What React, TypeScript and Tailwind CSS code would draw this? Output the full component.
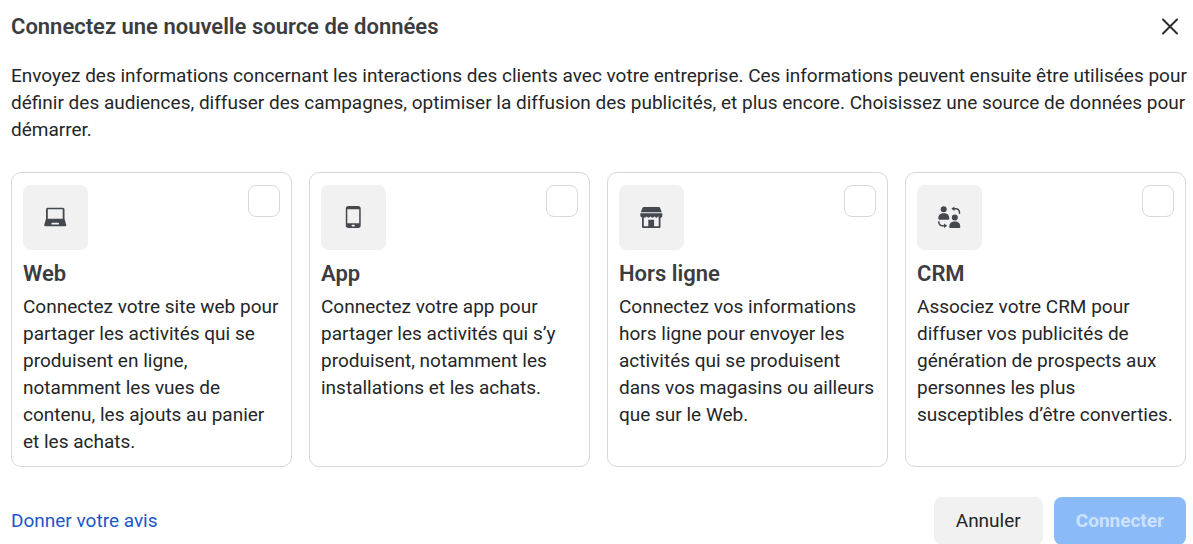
import React from 'react';

interface Source {
  id: string;
  title: string;
  description: string;
  icon: React.ReactNode;
}

const SOURCES: Source[] = [
  {
    id: 'web',
    title: 'Web',
    description:
      'Connectez votre site web pour partager les activités qui se produisent en ligne, notamment les vues de contenu, les ajouts au panier et les achats.',
    icon: (
      <svg viewBox="0 0 23 23" className="w-[23px] h-[23px]" fill="#444950" aria-hidden="true">
        <path
          fillRule="evenodd"
          d="M3.500 1.800h15.500a1.500 1.500 0 0 1 1.500 1.500V13H2V3.300a1.500 1.500 0 0 1 1.500-1.500zm.3 1.500V13h14.900V3.300z"
        />
        <path
          fillRule="evenodd"
          d="M2 12.700h18.500l1.700 6a1 1 0 0 1-1 1.500H1.300a1 1 0 0 1-1-1.500zm6.300 4.100a.9.9 0 0 0 0 1.800h5.800a.9.9 0 0 0 0-1.800z"
        />
      </svg>
    ),
  },
  {
    id: 'app',
    title: 'App',
    description:
      'Connectez votre app pour partager les activités qui s’y produisent, notamment les installations et les achats.',
    icon: (
      <svg viewBox="0 0 23 23" className="w-[23px] h-[23px]" fill="#444950" aria-hidden="true">
        <path
          fillRule="evenodd"
          d="M6.500 0h9.500a2.700 2.700 0 0 1 2.700 2.700v16.600a2.700 2.700 0 0 1-2.700 2.700H6.500a2.700 2.700 0 0 1-2.700-2.700V2.700A2.700 2.700 0 0 1 6.500 0zM5.300 3.200v14h11.900v-14zm5 15.600a.8.8 0 0 0 0 1.600h1.900a.8.8 0 0 0 0-1.600z"
        />
      </svg>
    ),
  },
  {
    id: 'offline',
    title: 'Hors ligne',
    description:
      'Connectez vos informations hors ligne pour envoyer les activités qui se produisent dans vos magasins ou ailleurs que sur le Web.',
    icon: (
      <svg viewBox="0 0 23 23" className="w-[23px] h-[23px]" fill="#444950" aria-hidden="true">
        <path d="M3.600 1h15.400a1 1 0 0 1 1 .8l1.800 4.500H.7l1.900-4.500a1 1 0 0 1 1-.8z" />
        <path d="M.3 7.200h22v2.100a2 2 0 0 1-4 1 2 2 0 0 1-3.800 0 2.100 2.100 0 0 1-4 0 2 2 0 0 1-3.800 0 2 2 0 0 1-2.900.9A2.200 2.200 0 0 1 .3 9.300z" />
        <path
          fillRule="evenodd"
          d="M2 10.500h1.800v9.700h4.500v-6.400h5.800v6.400h4.600v-9.700h1.800V21a1 1 0 0 1-1 1H3a1 1 0 0 1-1-1z"
        />
      </svg>
    ),
  },
  {
    id: 'crm',
    title: 'CRM',
    description:
      'Associez votre CRM pour diffuser vos publicités de génération de prospects aux personnes les plus susceptibles d’être converties.',
    icon: (
      <svg viewBox="0 0 23 23" className="w-[23px] h-[23px]" fill="#444950" aria-hidden="true">
        <circle cx="5.700" cy="3.200" r="3" />
        <path d="M.3 12.500c0-3.300 2.100-5.200 5.500-5.200s5.500 1.900 5.500 5.200c0 .8-.4 1.200-1.100 1.200H1.400c-.7 0-1.100-.4-1.100-1.200z" />
        <circle cx="16.800" cy="11.500" r="3" />
        <path d="M11.300 20.800c0-3.300 2.100-5.200 5.500-5.200s5.500 1.900 5.500 5.200c0 .8-.4 1.200-1.100 1.200h-8.800c-.7 0-1.100-.4-1.100-1.200z" />
        <path d="M13.300 2.700 16.500.5v4.400zM9.200 19.700 6 17.500v4.400z" />
        <path
          d="M15.500 2.700h2.500a3.500 3.500 0 0 1 3.500 3.500v1.100M.9 15.800v.6a3.300 3.300 0 0 0 3.300 3.300h2.300"
          fill="none"
          stroke="#444950"
          strokeWidth="1.500"
          strokeLinecap="round"
        />
      </svg>
    ),
  },
];

const SourceCard: React.FC<{ source: Source }> = ({ source }) => (
  <label
    htmlFor={source.id}
    className="flex flex-col rounded-[10px] border border-[#d6d8db] px-[11px] pt-3 pb-[11px] cursor-pointer"
  >
    <div className="flex items-start justify-between">
      <div className="flex items-center justify-center w-[65px] h-[65px] rounded-lg bg-[#f1f1f1]">
        {source.icon}
      </div>
      <input
        id={source.id}
        type="checkbox"
        className="appearance-none w-8 h-8 rounded-lg border border-[#d6d8db] bg-white checked:bg-[#1877f2]"
      />
    </div>
    <h2 className="mt-[9px] text-[22px] leading-[30px] font-semibold text-[#3c3d3f]">{source.title}</h2>
    <p className="mt-1 text-[19px] leading-[27px]">{source.description}</p>
  </label>
);

export default function App() {
  return (
    <main className="bg-white pt-3 font-['Roboto',sans-serif] text-[#252628]">
      <header className="flex items-center justify-between pl-[11px] pr-[11px]">
        <h1 className="text-[22px] leading-[30px] font-semibold text-[#3c3d3f]">
          Connectez une nouvelle source de données
        </h1>
        <button type="button" aria-label="Fermer">
          <svg viewBox="0 0 24 24" className="w-6 h-6" stroke="#2b2c2e" strokeWidth="2" strokeLinecap="round">
            <path d="M5 4.500 19 18.500M19 4.500 5 18.500" />
          </svg>
        </button>
      </header>
      <p className="mt-5 pl-[11px] text-[19px] leading-[27px]">
        Envoyez des informations concernant les interactions des clients avec votre entreprise. Ces informations peuvent
        ensuite être utilisées pour définir des audiences, diffuser des campagnes, optimiser la diffusion des
        publicités, et plus encore. Choisissez une source de données pour démarrer.
      </p>
      <div className="mt-[29px] grid grid-cols-4 gap-[17px] pl-[11px] pr-[7px]">
        {SOURCES.map((source) => (
          <SourceCard key={source.id} source={source} />
        ))}
      </div>
      <footer className="mt-[30px] flex items-center justify-between pl-[11px] pr-[7px]">
        <a href="#avis" className="text-[19px] text-[#1d56c9]">
          Donner votre avis
        </a>
        <div className="flex gap-[11px]">
          <button type="button" className="h-12 rounded-lg bg-[#f1f1f1] px-[22px] text-[19px]">
            Annuler
          </button>
          <button
            type="button"
            className="h-12 rounded-lg bg-[#8bbaf9] px-[22px] text-[19px] font-bold text-[#cfe2fd]"
          >
            Connecter
          </button>
        </div>
      </footer>
    </main>
  );
}
